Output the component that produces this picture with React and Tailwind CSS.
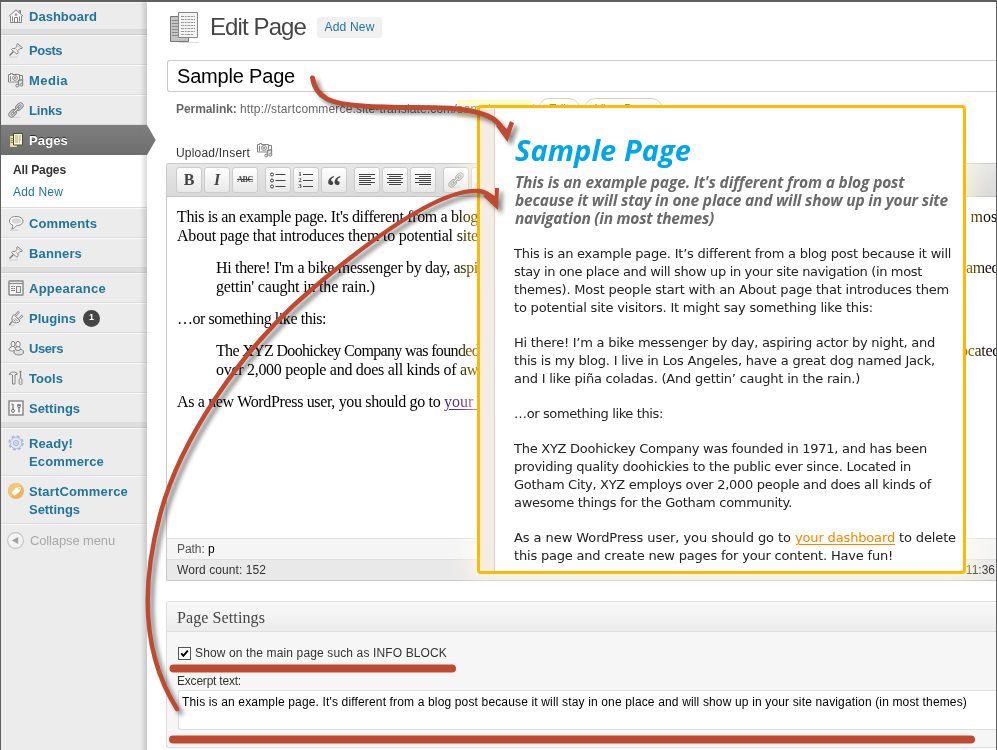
import { useLayoutEffect, useRef, useState } from "react";

// Single line of text whose tracking is adjusted to fill a given width.
function Fit({ w, className = "", children }) {
  const ref = useRef(null);
  const [spacing, setSpacing] = useState(0);
  useLayoutEffect(() => {
    const el = ref.current;
    el.style.letterSpacing = "0px";
    const natural = el.getBoundingClientRect().width;
    const s = (w - natural) / el.textContent.length;
    el.style.letterSpacing = s + "px";
    setSpacing(s);
  }, [w]);
  return (
    <span ref={ref} className={"inline-block whitespace-pre " + className} style={{ letterSpacing: spacing + "px" }}>
      {children}
    </span>
  );
}

const Svg = ({ children, size = 16, className = "" }) => (
  <svg width={size} height={size} viewBox="0 0 16 16" fill="none" stroke="#858585" strokeWidth="1" className={"shrink-0 " + className}>
    {children}
  </svg>
);

const icons = {
  home: (
    <Svg>
      <path d="M2.500 8.500 8 3.600l5.500 4.900v5.500h-11z" fill="#f8f8f8" stroke="none" />
      <path d="M.8 8.300 8 1.800l7.200 6.500M2.500 8v6.500h11V8M12.500 5.500v-3h-1.300v2M6.500 14.500V9.500h3v5M4.500 8.500v5M11.500 8.500v5M8 5v2.500M6.700 7h2.600" />
    </Svg>
  ),
  pin: (
    <Svg>
      <path d="M1 15h9" stroke="#cfcfcf" />
      <path d="m1.500 13.500 4-4" stroke="#777" strokeWidth="1.300" />
      <path d="m9.500 1.500 5 4.300-1.500.9-1-.3-2.200 2.300.4 2.200-1.300 1.300-5.400-4.600 1.200-1.200 2.300.2 2.200-2.500-.5-1.200z" fill="#f2f2f2" />
      <path d="m7.500 6.800 2.200 1.900M10.300 4l2 1.800" stroke="#aaa" />
    </Svg>
  ),
  media: (
    <Svg>
      <path d="M.5 2.500h2v-1h2v1h7v7.500H.5z" fill="#f5f5f5" />
      <path d="M2.500 4v5" />
      <circle cx="7" cy="6" r="2.400" fill="#fff" />
      <circle cx="7" cy="6" r=".8" />
      <path d="M10.500 13.500V8.500l4-1v5" fill="#eee" strokeWidth="1.300" />
      <circle cx="9.200" cy="13.600" r="1.400" fill="#ddd" />
      <circle cx="13.400" cy="12.800" r="1.400" fill="#ddd" />
      <path d="M12 3.500h2.500V7" />
    </Svg>
  ),
  link: (
    <Svg>
      <path d="M3 15.300h9" stroke="#cfcfcf" />
      <g transform="rotate(-45 8 8)">
        <rect x="-1" y="5.300" width="8.500" height="5.400" rx="2.700" fill="#efefef" />
        <rect x="1" y="7" width="4.500" height="2" rx="1" />
        <rect x="8.500" y="5.300" width="8.500" height="5.400" rx="2.700" fill="#efefef" />
        <rect x="10.500" y="7" width="4.500" height="2" rx="1" />
        <rect x="4.500" y="7" width="7" height="2" rx="1" fill="#fff" />
      </g>
    </Svg>
  ),
  pages: (
    <Svg>
      <path d="M2.500 4.500h6v10h-6z" fill="#f3e9a8" stroke="#e9dc8c" />
      <path d="M2.500 6.500h3M2.500 8.500h3M2.500 10.500h3" stroke="#8d8455" />
      <path d="M5.500 1.500h9v11.500h-9z" fill="#fff9d8" stroke="#4d4a3c" />
      <path d="M7 4h6M7 6h6M7 8h6M7 10h5" stroke="#aaa385" strokeDasharray="3 .6" />
    </Svg>
  ),
  comment: (
    <Svg>
      <path d="M2 15.300h8" stroke="#cfcfcf" />
      <path d="M8 1.500c4 0 7 1.800 7 4.600s-3 4.500-6.500 4.500c-1 1.500-2.700 3-4.800 3.500.9-1.300 1.200-2.600 1-4C2.500 9.300 1.500 7.900 1.500 6.200 1.500 3.300 4.200 1.500 8 1.500z" fill="#f8f8f8" />
      <path d="M3.500 6c0-1.500 2-2.700 4.500-2.700S13 4.500 13 6c0 1.400-2 2.600-4.800 2.600S3.500 7.500 3.500 6z" fill="#d6d6d6" stroke="none" />
    </Svg>
  ),
  appearance: (
    <Svg>
      <rect x="1" y="1" width="14" height="14" rx=".5" fill="#f8f8f8" strokeWidth="1.400" />
      <path d="M1.500 3.500h13" strokeWidth="1.200" />
      <rect x="8.500" y="6.500" width="4" height="6" fill="#eee" />
      <path d="M3 6.500h2M5.500 6.500H7M3 8.500h2M5.500 8.500H7M3 10.500h4" />
    </Svg>
  ),
  plugin: (
    <Svg>
      <path d="M1 15.300h6" stroke="#cfcfcf" />
      <path d="M1 14.500c1.800.3 1.500-2.500 3.500-2.700" strokeWidth="1.500" />
      <path d="M6 4.500 12 11c-2 2-4.800 2.500-7 .9C3 9.700 4 6.500 6 4.500z" fill="#eee" />
      <path d="m7.500 5.500 3.500-4M10.800 9l4-3.600" strokeWidth="2.200" />
      <path d="m7.500 5.500 3.500-4M10.800 9l4-3.600" stroke="#fff" strokeWidth=".8" />
      <path d="M7 8.500 9.500 11M5.500 9.500l2 2" />
    </Svg>
  ),
  users: (
    <Svg>
      <ellipse cx="5" cy="4" rx="1.900" ry="2.700" fill="#f8f8f8" />
      <path d="M6 10.500c-2 1-5 .5-5-1.200 0-1.500 1.500-2.400 3-2.800M6 7c.8.300 1.300.6 1.700 1" fill="#f5f5f5" />
      <ellipse cx="10" cy="4.300" rx="2.200" ry="3" fill="#f8f8f8" />
      <ellipse cx="10.700" cy="12" rx="4.800" ry="2.900" fill="#e2e2e2" />
      <ellipse cx="10" cy="8.600" rx="2.600" ry="1.900" fill="#eee" />
    </Svg>
  ),
  tools: (
    <Svg>
      <path d="M1 4.500c1-2 2.800-2.500 5.500-2.500l2.500 1v1.500H7v9.500H4.500v-9C3 4 2 4.500 1 4.500z" fill="#eee" />
      <path d="M12.500 1v7M11.500 1.500h2" strokeWidth="1.300" />
      <rect x="11.200" y="8.500" width="2.800" height="6" rx="1.200" fill="#eee" />
    </Svg>
  ),
  settings: (
    <Svg>
      <rect x="1" y="1" width="14" height="14" fill="#f8f8f8" strokeWidth="1.400" />
      <path d="M5 4v5M11 8v4.500M4 3.500v1M10 6V4M12 6V4" strokeWidth="1.200" stroke="#666" />
      <circle cx="5" cy="10.800" r="1.500" stroke="#666" />
      <circle cx="11" cy="6.300" r="1.300" stroke="#666" />
    </Svg>
  ),
  gear: (
    <Svg>
      <circle cx="8" cy="8" r="6.200" stroke="#a9b8d6" strokeWidth="3" strokeDasharray="2.700 2.170" />
      <circle cx="8" cy="8" r="5.700" fill="#dfe6f4" stroke="#b5c2dc" />
      <circle cx="8" cy="8" r="2.400" fill="#f3f6fc" stroke="#92a4c6" />
      <circle cx="8" cy="8" r=".8" fill="#7f91b5" stroke="none" />
    </Svg>
  ),
  tag: (
    <Svg>
      <circle cx="8" cy="8" r="8" fill="#efb45f" stroke="none" />
      <path d="M0 8a8 8 0 0 1 13-6.200L3 14.200A8 8 0 0 1 0 8z" fill="#f4c67c" stroke="none" />
      <path d="m3.500 10 4-4.700 4.800-1.500.8 1-1.500 3.600-4.800 4.300z" fill="#fff" stroke="none" />
      <circle cx="11" cy="5.800" r=".8" fill="#efb45f" stroke="none" />
    </Svg>
  ),
};

function Item({ icon, label, w, h = "h-[30px]", children }) {
  return (
    <div className={"flex items-center border-t border-b border-t-[#f9f9f9] border-b-[#dcdcdc] pl-[7px] " + h}>
      {icons[icon]}
      <Fit w={w} className="ml-[5px] pt-[2px] text-[13px] font-bold text-[#21759b]">{label}</Fit>
      {children}
    </div>
  );
}

function TallItem({ icon, lines }) {
  return (
    <div className="flex h-[48px] border-t border-b border-t-[#f9f9f9] border-b-[#dcdcdc] pt-[6px] pl-[7px]">
      {icons[icon]}
      <div className="ml-[5px] flex flex-col items-start text-[13px] font-bold leading-[18px] text-[#21759b]">
        {lines.map(([t, w]) => <Fit key={t} w={w}>{t}</Fit>)}
      </div>
    </div>
  );
}

const Sep = () => <div className="h-[5px] border-b border-[#cfcfcf] bg-[#dedede]" />;

function Sidebar() {
  return (
    <div className="relative w-[146px] shrink-0 bg-[#ececec]">
      <Item icon="home" label="Dashboard" w={68} h="h-[28px]" />
      <Sep />
      <Item icon="pin" label="Posts" w={33} />
      <Item icon="media" label="Media" w={39} />
      <Item icon="link" label="Links" w={33} />
      <div className="flex h-[30px] items-center bg-gradient-to-b from-[#7f7f7f] to-[#6d6d6d] pl-[7px]">
        {icons.pages}
        <Fit w={39} className="ml-[5px] pt-[2px] text-[13px] font-bold text-white [text-shadow:0_-1px_0_#333]">Pages</Fit>
      </div>
      <div className="flex h-[53px] flex-col items-start border-b border-[#dcdcdc] bg-white pt-[4px] pl-[12px] text-[12px] leading-[22px]">
        <Fit w={53} className="font-bold text-[#333]">All Pages</Fit>
        <Fit w={50} className="text-[#21759b]">Add New</Fit>
      </div>
      <Item icon="comment" label="Comments" w={68} />
      <Item icon="pin" label="Banners" w={53} />
      <Sep />
      <Item icon="appearance" label="Appearance" w={77} />
      <Item icon="plugin" label="Plugins" w={47}>
        <span className="ml-[7px] flex size-[17px] items-center justify-center rounded-full bg-[#464646] text-[9px] font-bold text-white">1</span>
      </Item>
      <Item icon="users" label="Users" w={34} />
      <Item icon="tools" label="Tools" w={34} />
      <Item icon="settings" label="Settings" w={51} />
      <Sep />
      <TallItem icon="gear" lines={[["Ready!", 44], ["Ecommerce", 75]]} />
      <TallItem icon="tag" lines={[["StartCommerce", 99], ["Settings", 51]]} />
      <div className="flex h-[32px] items-center border-t border-[#f9f9f9] pl-[6px]">
        <Svg size={17}>
          <circle cx="8" cy="8" r="7.400" fill="#f4f4f4" stroke="#c3c3c3" />
          <path d="M10.500 4.800v6.400L4.500 8z" fill="#a3a3a3" stroke="none" />
        </Svg>
        <Fit w={85} className="ml-[6px] text-[13px] text-[#a9a9a9]">Collapse menu</Fit>
      </div>
      <div className="absolute inset-y-0 right-0 w-[7px] bg-gradient-to-r from-transparent to-black/15" />
      <svg className="absolute left-[140px] top-[123px]" width="16" height="30">
        <defs>
          <linearGradient id="tip" x1="0" y1="0" x2="0" y2="1">
            <stop offset="0" stopColor="#7f7f7f" />
            <stop offset="1" stopColor="#6d6d6d" />
          </linearGradient>
        </defs>
        <path d="M0 0h6L14.700 15 6 30H0z" fill="url(#tip)" />
      </svg>
    </div>
  );
}

const Tool = ({ children, ml = "ml-[2px]" }) => (
  <span className={"flex size-[26px] items-center justify-center rounded-[3px] border border-[#cbcbcb] bg-gradient-to-b from-white to-[#e8e8e8] font-['Liberation_Serif',serif] text-[#444] " + ml}>
    {children}
  </span>
);

const Lines = ({ kind }) => (
  <svg width="18" height="18" stroke="#444">
    {[3.5, 5.5, 7.5, 9.5, 11.5, 13.5].map((y, i) => {
      const s = i % 2 ? 4 : 0;
      const x1 = kind === "left" ? 1 : kind === "right" ? 1 + s : 1 + s / 2;
      return <path key={y} d={`M${x1} ${y}h${16 - s}`} />;
    })}
  </svg>
);

function Editor() {
  return (
    <div className="mt-[1px] ml-[19px] h-[418px] overflow-hidden rounded-tl-[3px] border border-r-0 border-[#cacaca] bg-white">
      <div className="flex h-[33px] items-center border-b border-[#c6c6c6] bg-gradient-to-b from-[#e7e7e7] to-[#d9d9d9] pl-[9px]">
        <Tool ml=""><b className="text-[16px]">B</b></Tool>
        <Tool><b className="text-[16px] italic">I</b></Tool>
        <Tool><b className="text-[8px] tracking-[-0.400px] line-through">ABC</b></Tool>
        <Tool ml="ml-[7px]">
          <svg width="18" height="18" stroke="#444" fill="none">
            {[3.5, 9.5, 15.5].map((y) => <g key={y}><circle cx="3" cy={y} r="1.500" /><path d={`M6.500 ${y}h10`} /></g>)}
          </svg>
        </Tool>
        <Tool>
          <span className="flex flex-col text-[7px] font-bold leading-[6px]"><i className="not-italic">1</i><i className="not-italic">2</i><i className="not-italic">3</i></span>
          <svg width="12" height="18" stroke="#444">{[3.5, 9.5, 15.5].map((y) => <path key={y} d={`M1 ${y}h10`} />)}</svg>
        </Tool>
        <Tool><b className="h-[18px] text-[29px] leading-[30px]">“</b></Tool>
        <Tool ml="ml-[7px]"><Lines kind="left" /></Tool>
        <Tool><Lines kind="center" /></Tool>
        <Tool><Lines kind="right" /></Tool>
        <Tool ml="ml-[7px]"><span className="opacity-60">{icons.link}</span></Tool>
        <Tool><span className="opacity-60">{icons.link}</span></Tool>
      </div>
      <div className="flex h-[341px] flex-col gap-[13px] pt-[10px] pl-[10px] font-['Liberation_Serif',serif] text-[16px] leading-[19px] text-black">
        <div>
          <div className="flex h-[19px]"><Fit w={301}>This is an example page. It's different from a blog</Fit><span className="ml-[476px] whitespace-pre">in most</span></div>
          <div className="h-[19px]"><Fit w={301}>About page that introduces them to potential site</Fit></div>
        </div>
        <div className="pl-[39px]">
          <div className="flex h-[19px]"><Fit w={262}>Hi there! I'm a bike messenger by day, aspi</Fit><Fit w={33} className="ml-[488px]">amed</Fit></div>
          <div className="h-[19px]"><Fit w={159}>gettin' caught in the rain.)</Fit></div>
        </div>
        <div className="h-[19px]"><Fit w={149}>…or something like this:</Fit></div>
        <div className="pl-[39px]">
          <div className="flex h-[19px]"><Fit w={263}>The XYZ Doohickey Company was founded</Fit><Fit w={40} className="ml-[481px]">ocated</Fit></div>
          <div className="h-[19px]"><Fit w={262}>over 2,000 people and does all kinds of aw</Fit></div>
        </div>
        <div className="h-[19px]"><Fit w={267}>{"As a new WordPress user, you should go to "}</Fit><span className="whitespace-pre text-[#4b2a86] underline underline-offset-2">{"your    "}</span></div>
      </div>
      <div className="flex h-[21px] items-center border-t border-[#dfdfdf] bg-[#f5f5f5] pl-[10px] text-[12px] text-[#555]">
        <Fit w={31}>{"Path: "}</Fit><span className="text-black">p</span>
      </div>
      <div className="flex h-[21px] items-center justify-between border-t border-[#dfdfdf] bg-[#e9e9e9] pl-[10px] text-[12px] text-[#333]">
        <Fit w={89}>Word count: 152</Fit>
        <span className="mr-px">11:36</span>
      </div>
    </div>
  );
}

function Settings() {
  return (
    <div className="mt-[20px] ml-[19px] h-[147px] rounded-l-[3px] border border-r-0 border-[#dfdfdf] bg-[#f6f6f6]">
      <div className="flex h-[30px] items-center border-b border-[#dfdfdf] bg-gradient-to-b from-[#f9f9f9] to-[#ececec] pt-[3px] pl-[10px]">
        <Fit w={88} className="font-['Liberation_Serif',serif] text-[16px] text-[#464646]">Page Settings</Fit>
      </div>
      <div className="flex items-center pt-[12px] pl-[11px] text-[12px] leading-[18px] text-[#333]">
        <svg width="13" height="13" className="shrink-0">
          <rect x=".5" y=".5" width="12" height="12" fill="#fff" stroke="#555" />
          <path d="M3.200 6.300 5.400 8.800 9.800 3.700" fill="none" stroke="#000" strokeWidth="2" />
        </svg>
        <Fit w={252} className="ml-[4px]">Show on the main page such as INFO BLOCK</Fit>
      </div>
      <div className="mt-[10px] pl-[10px] text-[12px] leading-[18px] text-[#333]"><Fit w={64}>Excerpt text:</Fit></div>
      <div className="ml-[11px] h-[40px] rounded-l-[3px] border border-r-0 border-[#dfdfdf] bg-white pt-[2px] pl-[3px] text-[12px] leading-[18px] text-black">
        <Fit w={785}>This is an example page. It's different from a blog post because it will stay in one place and will show up in your site navigation (in most themes)</Fit>
      </div>
    </div>
  );
}

const paragraphs = [
  [["This is an example page. It’s different from a blog post because it will", 437], ["stay in one place and will show up in your site navigation (in most", 408], ["themes). Most people start with an About page that introduces them", 435], ["to potential site visitors. It might say something like this:", 359]],
  [["Hi there! I’m a bike messenger by day, aspiring actor by night, and", 421], ["this is my blog. I live in Los Angeles, have a great dog named Jack,", 421], ["and I like piña coladas. (And gettin’ caught in the rain.)", 346]],
  [["…or something like this:", 149]],
  [["The XYZ Doohickey Company was founded in 1971, and has been", 413], ["providing quality doohickies to the public ever since. Located in", 397], ["Gotham City, XYZ employs over 2,000 people and does all kinds of", 417], ["awesome things for the Gotham community.", 278]],
];

function Callout() {
  return (
    <div className="absolute left-[477px] top-[105px] flex h-[469px] w-[489px] overflow-hidden rounded-[4px] border-[3px] border-[#ffb900] bg-white">
      <div className="w-[15px] shrink-0 border-r border-[#ddd0c4] bg-[#f5ede2]" />
      <div className="pt-[23px] pl-[19px]">
        <div className="h-[41px] pl-px font-['Open_Sans',sans-serif] text-[29px] font-bold italic leading-[38px] text-[#00a5e3]"><Fit w={176}>Sample Page</Fit></div>
        <div className="flex flex-col items-start pl-px pt-px font-['Open_Sans',sans-serif] text-[15.500px] font-bold italic leading-[18px] text-[#6a6a6a]">
          <Fit w={389}>This is an example page. It's different from a blog post</Fit>
          <Fit w={433}>because it will stay in one place and will show up in your site</Fit>
          <Fit w={199}>navigation (in most themes)</Fit>
        </div>
        <div className="flex flex-col gap-[17px] pt-[18px] font-['DejaVu_Sans',sans-serif] text-[13px] leading-[18px] text-[#222]">
          {paragraphs.map((p) => (
            <div key={p[0][0]} className="flex flex-col items-start">{p.map(([t, w]) => <Fit key={t} w={w}>{t}</Fit>)}</div>
          ))}
          <div className="flex flex-col items-start">
            <div className="flex whitespace-pre">
              <Fit w={281}>{"As a new WordPress user, you should go to "}</Fit>
              <Fit w={100} className="text-[#ff8400] underline underline-offset-2">your dashboard</Fit>
              <Fit w={61}>{" to delete"}</Fit>
            </div>
            <Fit w={379}>this page and create new pages for your content. Have fun!</Fit>
          </div>
        </div>
      </div>
    </div>
  );
}

function Arrows() {
  return (
    <svg className="absolute left-0 top-0" width="996" height="750" fill="none" stroke="#bf4a32" strokeLinecap="round">
      <g className="[filter:drop-shadow(4px_4px_2px_rgba(0,0,0,0.450))]">
        <path d="M312.500 78C316 99 332 104 362 106C400 109 432 106 458 109C484 112 497 118 503 130" strokeWidth="5" />
        <path d="M496 126 501 124 507 129 510 121 514 123 507.500 142z" fill="#bf4a32" stroke="none" />
        <path d="M177 709C143 655 140 590 160 515C180 440 240 350 312 289C370 240 440 188 479 191C486 192 489 194 492 198" strokeWidth="4.500" />
        <path d="M483 196 489 193 495 196 495 188 499 188 498 210z" fill="#bf4a32" stroke="none" />
      </g>
      <path d="M173.500 668.500H452" strokeWidth="8" />
      <path d="M173 739.500H971" strokeWidth="8" />
    </svg>
  );
}

// Annotation layer, anchored to the outer edge of the frame.
function Overlay() {
  return (
    <>
      <div className="absolute -left-px -top-[2px] h-[750px] w-[996px] mix-blend-screen">
        <div className="absolute left-[477px] top-[105px] h-[469px] w-[489px] rounded-[4px] shadow-[0_0_20px_8px_#c39c00]" />
      </div>
      <div className="absolute -left-px -top-[2px] h-[750px] w-[996px]">
        <Callout />
        <Arrows />
      </div>
    </>
  );
}

export default function App() {
  return (
    <div className="relative isolate flex h-[750px] w-[997px] overflow-hidden border-t-2 border-r border-l border-[#606060] bg-white font-['Liberation_Sans',Arial,sans-serif]">
      <Sidebar />
      <div className="min-w-0 flex-1 overflow-hidden">
        <div className="flex h-[50px] items-center pl-[22px]">
          <svg width="32" height="32" className="mt-[2px]" stroke="#777" fill="none">
            <path d="M10 30.500h20" stroke="#ddd" />
            <path d="M1.500 4.500h18v25h-18z" fill="#c4c4c4" />
            <path d="M3 8.500h6M3 11.500h6M3 14.500h6M3 17.500h6M3 20.500h6M3 23.500h6" stroke="#8a8a8a" />
            <path d="M9.500.5h19v25h-19z" fill="#f4f4f4" stroke="#888" />
            <path d="M12 4.500h14M12 7.500h14M12 10.500h14M12 13.500h14M12 16.500h14M12 19.500h14M12 22.500h12" stroke="#999" strokeDasharray="3 .7 2 .7" />
          </svg>
          <Fit w={96} className="ml-[9px] text-[24px] leading-[30px] text-[#464646]">Edit Page</Fit>
          <span className="ml-[11px] flex h-[21px] w-[65px] items-center justify-center rounded-[3px] bg-[#f1f1f1] text-[12px] text-[#21759b]"><Fit w={50}>Add New</Fit></span>
        </div>
        <div className="mt-[8px] ml-[20px] flex h-[32px] items-center rounded-l-[3px] border border-r-0 border-[#ccc] pl-[9px] text-[20px] text-black">
          <Fit w={118}>Sample Page</Fit>
        </div>
        <div className="mt-[6px] ml-[29px] flex h-[22px] items-center text-[12px] text-[#666]">
          <b><Fit w={64}>{"Permalink: "}</Fit></b>
          <Fit w={217}>http://startcommerce.site-translate.com/</Fit>
          <Fit w={74} className="bg-[#fffbcc]">sample-page</Fit>
          <span className="w-[7px]">/</span>
          <span className="flex h-[22px] w-[42px] items-center justify-center rounded-[11px] border border-[#bbb] text-[#333]">Edit</span>
          <span className="ml-[4px] flex h-[22px] w-[79px] items-center justify-center rounded-[11px] border border-[#bbb] text-[#333]">View Page</span>
        </div>
        <div className="mt-[22px] ml-[29px] flex h-[20px] items-center text-[12px] text-[#333]">
          <Fit w={74} className="pt-px">Upload/Insert</Fit>
          <span className="-mt-[4px] ml-[7px]">{icons.media}</span>
        </div>
        <Editor />
        <Settings />
      </div>
      <Overlay />
    </div>
  );
}
